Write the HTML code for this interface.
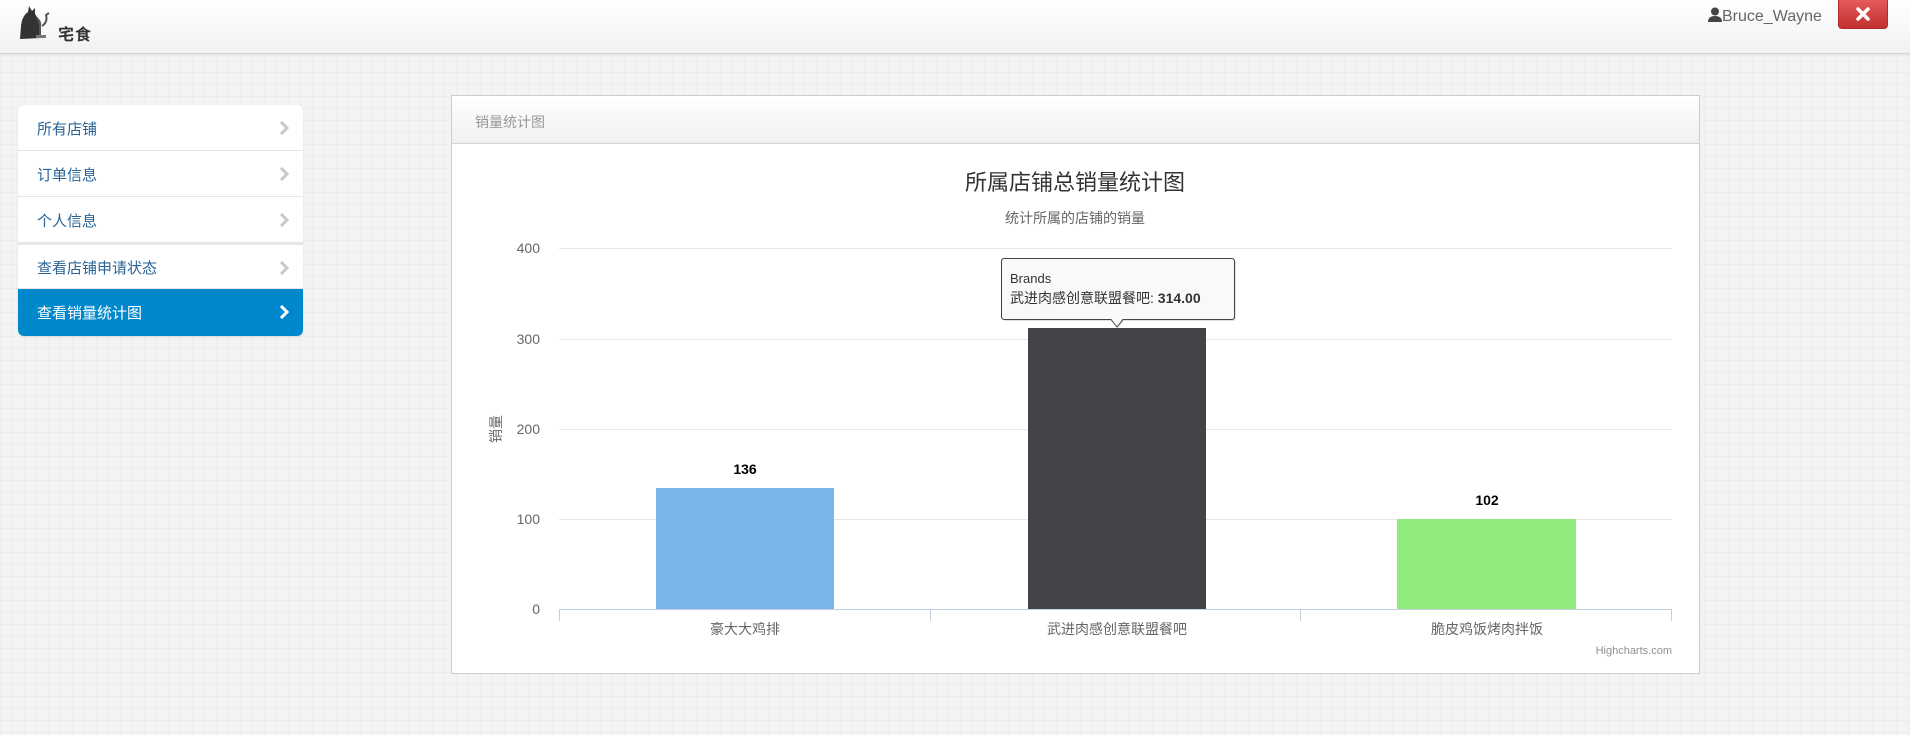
<!DOCTYPE html>
<html><head><meta charset="utf-8">
<style>
*{margin:0;padding:0;box-sizing:border-box}
body{width:1910px;height:735px;overflow:hidden;position:relative;font-family:"Liberation Sans","Noto Sans CJK SC",sans-serif;
background-color:#f3f3f3;
background-image:linear-gradient(rgba(0,0,0,0.025) 1px,transparent 1px),linear-gradient(90deg,rgba(0,0,0,0.025) 1px,transparent 1px);
background-size:12px 12px;}
.hdr{position:absolute;left:0;top:0;width:1910px;height:54px;background:linear-gradient(#fff,#f1f1f1);border-bottom:1px solid #d4d4d4;box-shadow:0 1px 3px rgba(0,0,0,.08)}
.logo{position:absolute;left:58px;top:21px;font-size:16px;font-weight:bold;color:#333;letter-spacing:1px}
.user{position:absolute;left:1708px;top:7px;font-size:16px;color:#666}
.btn{position:absolute;left:1838px;top:0;width:50px;height:29px;background:linear-gradient(#e45a5a,#c1312f);border-radius:0 0 4px 4px;border:1px solid #b32b2b;border-top:none}
.nav{position:absolute;left:18px;top:105px;width:285px;background:#fff;border-radius:6px;box-shadow:0 1px 2px rgba(0,0,0,.08)}
.nav div{height:46px;border-bottom:1px solid #e5e5e5;position:relative;font-size:15px;color:#2a6496;padding:13px 0 0 19px}
.nav div.gap{border-top:2px solid #e8e8e8;height:46px;padding-top:12px}
.nav div.act{background:#0088cc;color:#fff;border:none;border-radius:0 0 6px 6px;height:47px}
.nav div svg{position:absolute;right:14px;top:16px}
.panel{position:absolute;left:451px;top:95px;width:1249px;height:579px;background:#fff;border:1px solid #ccc}
.ph{height:48px;background:linear-gradient(#fff,#f0f0f0);border-bottom:1px solid #d5d5d5;font-size:14px;color:#999;padding:16px 0 0 23px}
svg text{font-family:"Liberation Sans","Noto Sans CJK SC",sans-serif}
</style></head><body>
<div class="hdr">
<svg style="position:absolute;left:18px;top:4px" width="34" height="36" viewBox="0 0 34 36">
<path d="M2 35 L3 22 Q4 12 10 8 L11 2 L14 7 L17 4 L17 10 Q22 16 21 26 L23 34 Z" fill="#333"/>
<path d="M22 34 L22 18 M22 18 L19 14 M24 22 Q30 18 28 11 L31 9" stroke="#555" stroke-width="2" fill="none"/>
<rect x="18" y="31" width="10" height="3" fill="#777"/>
</svg>
<div class="logo">宅食</div>
<div class="user"><svg width="14" height="15" viewBox="0 0 14 15" style="vertical-align:-1px"><circle cx="7" cy="4.5" r="4" fill="#444"/><path d="M0 15 Q0 9 7 9 Q14 9 14 15Z" fill="#444"/></svg>Bruce_Wayne</div>
<div class="btn"><svg width="50" height="29" viewBox="0 0 50 29" style="position:absolute;left:-1px;top:0"><path d="M20 9 L30 19 M30 9 L20 19" stroke="#fff" stroke-width="3.5" stroke-linecap="round"/></svg></div>
</div>
<div class="nav">
<div>所有店铺<svg width="10" height="14"><path d="M2 1 L8 7 L2 13" stroke="#c8c8c8" stroke-width="3" fill="none"/></svg></div>
<div>订单信息<svg width="10" height="14"><path d="M2 1 L8 7 L2 13" stroke="#c8c8c8" stroke-width="3" fill="none"/></svg></div>
<div>个人信息<svg width="10" height="14"><path d="M2 1 L8 7 L2 13" stroke="#c8c8c8" stroke-width="3" fill="none"/></svg></div>
<div class="gap">查看店铺申请状态<svg width="10" height="14"><path d="M2 1 L8 7 L2 13" stroke="#c8c8c8" stroke-width="3" fill="none"/></svg></div>
<div class="act">查看销量统计图<svg width="10" height="14"><path d="M2 1 L8 7 L2 13" stroke="#fff" stroke-width="3" fill="none"/></svg></div>
</div>
<div class="panel"><div class="ph">销量统计图</div></div>
<svg style="position:absolute;left:0;top:0" width="1910" height="735">
<text x="1075" y="190" font-size="22" fill="#333" text-anchor="middle">所属店铺总销量统计图</text>
<text x="1075" y="223" font-size="14" fill="#666" text-anchor="middle">统计所属的店铺的销量</text>
<g stroke="#e6e6e6" stroke-width="1">
<line x1="559" y1="248.5" x2="1672" y2="248.5"/><line x1="559" y1="339.5" x2="1672" y2="339.5"/>
<line x1="559" y1="429.5" x2="1672" y2="429.5"/><line x1="559" y1="519.5" x2="1672" y2="519.5"/>
</g>
<g font-size="14" fill="#666" text-anchor="end">
<text x="540" y="253">400</text><text x="540" y="344">300</text><text x="540" y="434">200</text><text x="540" y="524">100</text><text x="540" y="614">0</text>
</g>
<text transform="translate(501,429) rotate(-90)" font-size="14" fill="#666" text-anchor="middle">销量</text>
<rect x="656" y="488" width="178" height="121" fill="#7cb5ec"/>
<rect x="1028" y="328" width="178" height="281" fill="#434348"/>
<rect x="1397" y="519" width="179" height="90" fill="#90ed7d"/>
<g stroke="#c0d0e0" stroke-width="1">
<line x1="559" y1="609.5" x2="1672" y2="609.5"/>
<line x1="559.5" y1="609" x2="559.5" y2="621"/><line x1="930.5" y1="609" x2="930.5" y2="621"/>
<line x1="1300.5" y1="609" x2="1300.5" y2="621"/><line x1="1671.5" y1="609" x2="1671.5" y2="621"/>
</g>
<g font-size="14" font-weight="bold" fill="#000" text-anchor="middle">
<text x="745" y="474">136</text><text x="1487" y="505">102</text>
</g>
<text x="1117" y="313" font-size="13" fill="#ccc" text-anchor="middle">314</text>
<g font-size="14" fill="#666" text-anchor="middle">
<text x="745" y="634">豪大大鸡排</text><text x="1117" y="634">武进肉感创意联盟餐吧</text><text x="1487" y="634">脆皮鸡饭烤肉拌饭</text>
</g>
<text x="1672" y="654" font-size="11" fill="#909090" text-anchor="end">Highcharts.com</text>
<path d="M1006 260 H1233 Q1236 260 1236 263 V318 Q1236 321 1233 321 H1124 L1118 328 L1112 321 H1006 Q1003 321 1003 318 V263 Q1003 260 1006 260Z" fill="rgba(0,0,0,0.12)"/>
<path d="M1004.5 258.5 H1231.5 Q1234.5 258.5 1234.5 261.5 V316.5 Q1234.5 319.5 1231.5 319.5 H1123 L1117 327 L1111 319.5 H1004.5 Q1001.5 319.5 1001.5 316.5 V261.5 Q1001.5 258.5 1004.5 258.5Z" fill="#f9f9f9" stroke="#434348" stroke-width="1"/>
<text x="1010" y="283" font-size="13" fill="#333">Brands</text>
<text x="1010" y="303" font-size="14" fill="#333">武进肉感创意联盟餐吧: <tspan font-weight="bold">314.00</tspan></text>
</svg>
</body></html>
